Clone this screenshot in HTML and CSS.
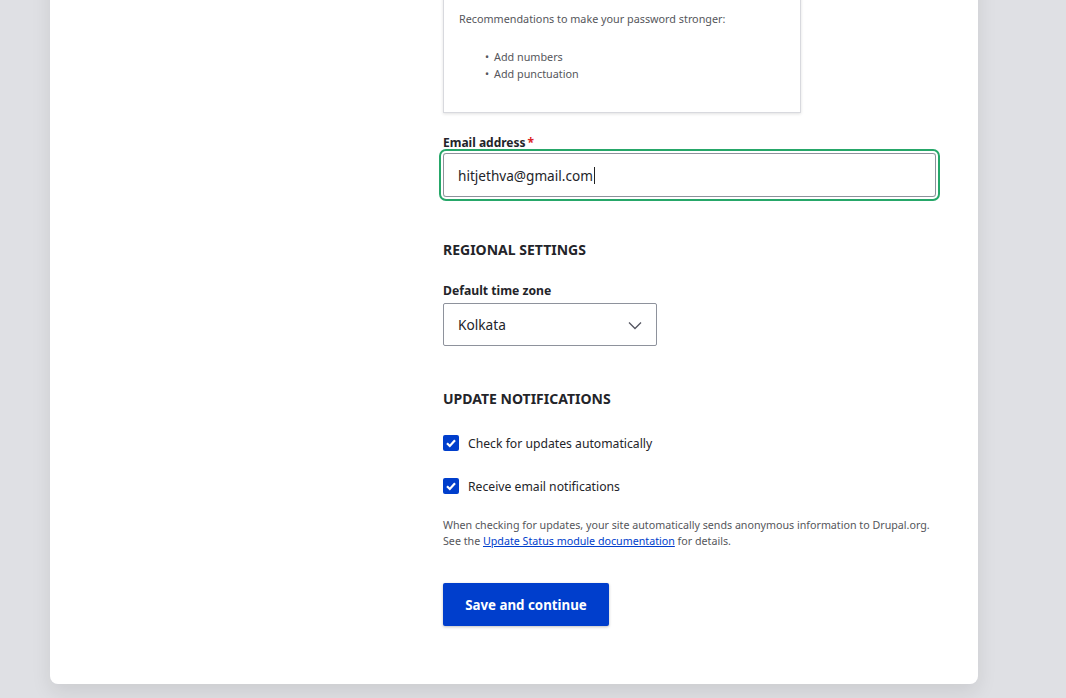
FILE: index.html
```html
<!DOCTYPE html>
<html lang="en">
<head>
<meta charset="utf-8">
<title>Configure site</title>
<link rel="stylesheet" href="styles.css">
</head>
<body>
<div class="page">
  <main class="card">
    <div class="sidebar"></div>
    <form class="content">
      <div class="pw-box">
        <p class="pw-text">Recommendations to make your password stronger:</p>
        <ul class="pw-list">
          <li>Add numbers</li>
          <li>Add punctuation</li>
        </ul>
      </div>

      <label class="label label-email">Email address<span class="req">*</span></label>
      <div class="input focused"><span class="input-value">hitjethva@gmail.com</span><span class="caret"></span></div>

      <h2 class="section-title regional">Regional settings</h2>
      <label class="label label-tz">Default time zone</label>
      <div class="select">
        <span>Kolkata</span>
        <svg class="chev" width="14" height="9" viewBox="0 0 14 9"><path d="M1 1.5 L7 7.5 L13 1.5" fill="none" stroke="#545560" stroke-width="1.3"/></svg>
      </div>

      <h2 class="section-title updates">Update notifications</h2>
      <div class="check-row first">
        <span class="checkbox"><svg width="16" height="16" viewBox="0 0 16 16"><path d="M4 8.2 L6.8 11 L12 5.2" fill="none" stroke="#fff" stroke-width="2.2"/></svg></span>
        <span class="check-label">Check for updates automatically</span>
      </div>
      <div class="check-row second">
        <span class="checkbox"><svg width="16" height="16" viewBox="0 0 16 16"><path d="M4 8.2 L6.8 11 L12 5.2" fill="none" stroke="#fff" stroke-width="2.2"/></svg></span>
        <span class="check-label">Receive email notifications</span>
      </div>
      <p class="desc">When checking for updates, your site automatically sends anonymous information to Drupal.org.<br>See the <a href="#">Update Status module documentation</a> for details.</p>

      <div class="actions"><button type="button" class="btn">Save and continue</button></div>
    </form>
  </main>
</div>
</body>
</html>
```

FILE: styles.css
```css
html, body {
  margin: 0;
  padding: 0;
  background: #dfe0e4;
  height: 100%;
  overflow: hidden;
}
body {
  font-family: "Noto Sans", "Open Sans", sans-serif;
  color: #232429;
}
.page {
  padding-left: 50px;
}
.card {
  width: 928px;
  margin-top: -40px;
  background: #fff;
  border-radius: 0 0 8px 8px;
  box-shadow: 0 8px 20px rgba(0, 0, 0, 0.09);
  display: grid;
  grid-template-columns: 393px 493px;
  padding-bottom: 58px;
}
.content {
  display: flex;
  flex-direction: column;
  align-items: flex-start;
}
.pw-box {
  width: 358px;
  box-sizing: border-box;
  border: 1px solid #d8d9de;
  border-top: none;
  box-shadow: 0 1px 3px rgba(0, 0, 0, 0.12);
  padding: 50px 15px 30px 15px;
  color: #55565b;
  font-size: 10.8px;
}
.pw-text {
  margin: 0;
  line-height: 18px;
}
.pw-list {
  margin: 20px 0 0 0;
  padding-left: 35px;
  line-height: 17px;
  list-style: none;
}
.pw-list li {
  position: relative;
}
.pw-list li::before {
  content: "\2022";
  position: absolute;
  left: -9px;
  top: 0;
  line-height: 17px;
}
.label {
  font-size: 12px;
  font-weight: 700;
  line-height: 18px;
}
.label-email {
  margin-top: 21px;
}
.req {
  color: #dc2323;
  margin-left: 2px;
}
.input {
  margin-top: 1px;
  width: 493px;
  height: 44px;
  box-sizing: border-box;
  border: 1px solid #8e929c;
  border-radius: 2px;
  display: flex;
  align-items: center;
  padding-left: 14px;
  font-size: 13.6px;
  color: #232429;
}
.input.focused {
  box-shadow: 0 0 0 2px #fff, 0 0 0 4px #26a769;
  border-radius: 3px;
}
.caret {
  display: inline-block;
  width: 1px;
  height: 17px;
  background: #222;
  margin-left: 1px;
}
.section-title {
  margin: 0;
  font-size: 14px;
  font-weight: 700;
  text-transform: uppercase;
  line-height: 20px;
  color: #232429;
}
.regional {
  margin-top: 43px;
}
.label-tz {
  margin-top: 22px;
  font-size: 12.2px;
}
.select {
  margin-top: 3px;
  width: 214px;
  height: 43px;
  box-sizing: border-box;
  border: 1px solid #8e929c;
  border-radius: 2px;
  display: flex;
  align-items: center;
  justify-content: space-between;
  padding: 0 14px 0 14px;
  font-size: 13.7px;
}
.chev {
  margin-top: 1px;
}
.updates {
  margin-top: 43px;
}
.check-row {
  display: flex;
  align-items: center;
  height: 20px;
  gap: 9px;
  font-size: 12.2px;
}
.check-row.first {
  margin-top: 24px;
}
.check-row.second {
  margin-top: 23px;
}
.checkbox {
  width: 16px;
  height: 16px;
  background: #003ecc;
  border-radius: 2px;
  display: block;
}
.checkbox svg {
  display: block;
}
.desc {
  margin: 21px 0 0 0;
  font-size: 10.7px;
  line-height: 16px;
  color: #55565b;
  white-space: nowrap;
}
.desc a {
  color: #003ecc;
}
.actions {
  margin-top: 34px;
}
.btn {
  height: 43px;
  width: 166px;
  border: none;
  border-radius: 2px;
  background: #003ecc;
  color: #fff;
  font-family: inherit;
  font-size: 13.3px;
  font-weight: 700;
  box-shadow: 0 1px 3px rgba(0, 0, 0, 0.25);
  cursor: pointer;
}
```
